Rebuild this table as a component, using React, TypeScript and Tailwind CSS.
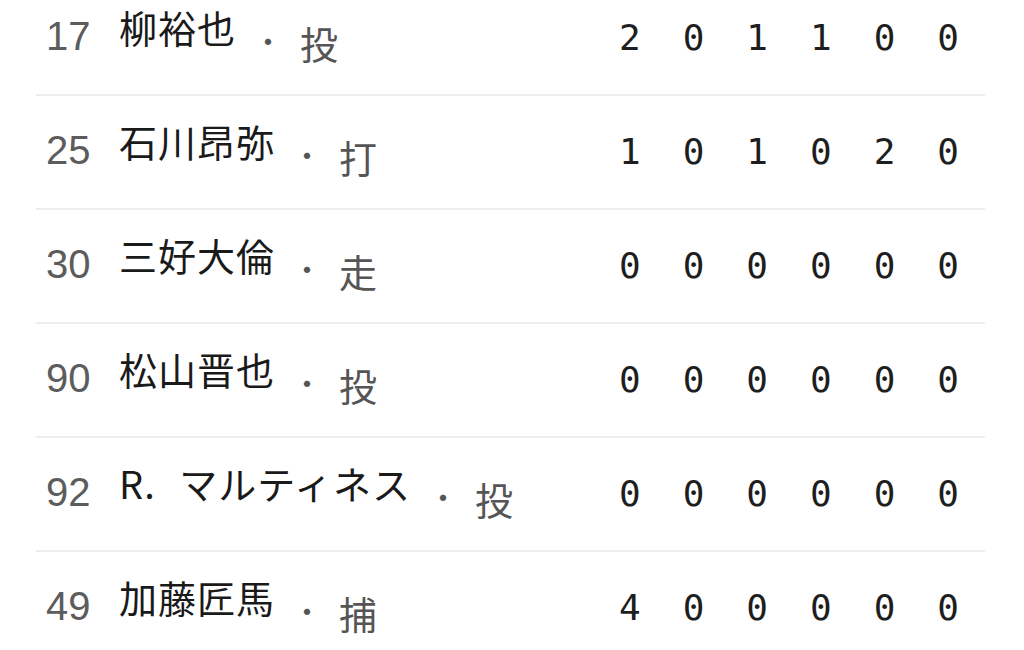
import React from "react";

type Row = { no: string; name: string; pos: string; stats: number[] };

const rows: Row[] = [
  { no: "17", name: "柳裕也", pos: "投", stats: [2, 0, 1, 1, 0, 0] },
  { no: "25", name: "石川昂弥", pos: "打", stats: [1, 0, 1, 0, 2, 0] },
  { no: "30", name: "三好大倫", pos: "走", stats: [0, 0, 0, 0, 0, 0] },
  { no: "90", name: "松山晋也", pos: "投", stats: [0, 0, 0, 0, 0, 0] },
  { no: "92", name: "R. マルティネス", pos: "投", stats: [0, 0, 0, 0, 0, 0] },
  { no: "49", name: "加藤匠馬", pos: "捕", stats: [4, 0, 0, 0, 0, 0] },
];

const cjk = "font-['Noto_Sans_CJK_JP',sans-serif]";

export default function App() {
  return (
    <div className="w-[1024px] h-[650px] overflow-hidden bg-white">
      <div className="-mt-[18px] ml-[36px] w-[949px]">
        {rows.map((r) => (
          <div
            key={r.no}
            className="flex items-start h-[114px] border-b-2 border-[#ededed]"
          >
            <div className="w-[83px] shrink-0 pl-[10px] mt-[34px] text-[40px] leading-none text-[#5c5c5c] font-['Liberation_Sans',sans-serif]">
              {r.no}
            </div>
            <div
              className={`mt-[26px] text-[38px] leading-none text-[#1a1a1a] whitespace-nowrap tracking-[1px] [word-spacing:14px] ${cjk}`}
            >
              {r.name}
            </div>
            <div
              className={`w-[64px] shrink-0 flex justify-center mt-[43px] text-[30px] leading-none text-[#555] ${cjk}`}
            >
              ・
            </div>
            <div
              className={`mt-[42px] text-[38px] leading-none text-[#555] ${cjk}`}
            >
              {r.pos}
            </div>
            <div className="ml-auto mr-[5px] w-[382px] grid grid-cols-6 mt-[38px] text-[36px] leading-none text-[#1e1e1e] font-['DejaVu_Sans_Mono',monospace]">
              {r.stats.map((s, i) => (
                <div key={i} className="text-center">
                  {s}
                </div>
              ))}
            </div>
          </div>
        ))}
      </div>
    </div>
  );
}
